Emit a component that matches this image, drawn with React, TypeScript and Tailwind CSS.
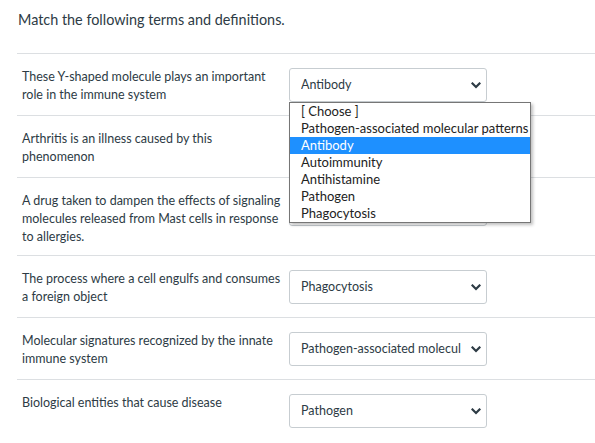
const rows = [
  { term: 'These Y-shaped molecule plays an important role in the immune system', value: 'Antibody', tall: false },
  { term: 'Arthritis is an illness caused by this phenomenon', value: 'Autoimmunity', tall: false },
  {
    term: 'A drug taken to dampen the effects of signaling molecules released from Mast cells in response to allergies.',
    value: 'Antihistamine',
    tall: true,
  },
  { term: 'The process where a cell engulfs and consumes a foreign object', value: 'Phagocytosis', tall: false },
  { term: 'Molecular signatures recognized by the innate immune system', value: 'Pathogen-associated molecul', tall: false },
  { term: 'Biological entities that cause disease', value: 'Pathogen', tall: false },
];

const options = [
  '[ Choose ]',
  'Pathogen-associated molecular patterns',
  'Antibody',
  'Autoimmunity',
  'Antihistamine',
  'Pathogen',
  'Phagocytosis',
];

function Chevron() {
  return (
    <svg width="10" height="7" viewBox="0 0 10 7" className="shrink-0">
      <path d="M1.5 1.5 L5 5 L8.5 1.5" fill="none" stroke="#2d3b45" strokeWidth="2.2" strokeLinecap="square" />
    </svg>
  );
}

function FakeSelect({ value }: { value: string }) {
  return (
    <div className="flex h-[34px] w-[198px] items-center justify-between rounded-[3px] border border-[#c7cdd1] bg-white pl-[11px] pr-[5px] text-[12.5px] text-[#2d3b45]">
      <span className="whitespace-nowrap overflow-hidden">{value}</span>
      <Chevron />
    </div>
  );
}

function OptionList() {
  return (
    <div className="absolute left-[289px] top-[102px] z-10 w-[242px] border border-[#767676] bg-white shadow-[2px_2px_3px_rgba(0,0,0,0.25)]">
      {options.map((opt) => (
        <div
          key={opt}
          className={
            opt === 'Antibody'
              ? 'h-[17px] whitespace-nowrap bg-[#1e90ff] pl-[11px] text-[13px] leading-[17px] text-white'
              : 'h-[17px] whitespace-nowrap pl-[11px] text-[13px] leading-[17px] text-[#222]'
          }
        >
          {opt}
        </div>
      ))}
    </div>
  );
}

export default function App() {
  return (
    <div className="relative h-[443px] w-[595px] overflow-hidden bg-white font-['Lato',_'Liberation_Sans',_sans-serif] text-[#2d3b45]">
      <div className="pl-[18px] pt-[11px] text-[14.4px] leading-[18px]">Match the following terms and definitions.</div>
      <div className="ml-[17px] mt-[24px]">
        {rows.map((row) => (
          <div
            key={row.term}
            className={
              row.tall
                ? 'flex h-[78px] border-t border-[#dcdfe2] pt-[14px]'
                : 'flex h-[62px] border-t border-[#dcdfe2] pt-[14px]'
            }
          >
            <div className="w-[272px] pl-[5px] pr-[4px] text-[12.5px] leading-[18px]">{row.term}</div>
            <FakeSelect value={row.value} />
          </div>
        ))}
      </div>
      <OptionList />
    </div>
  );
}
